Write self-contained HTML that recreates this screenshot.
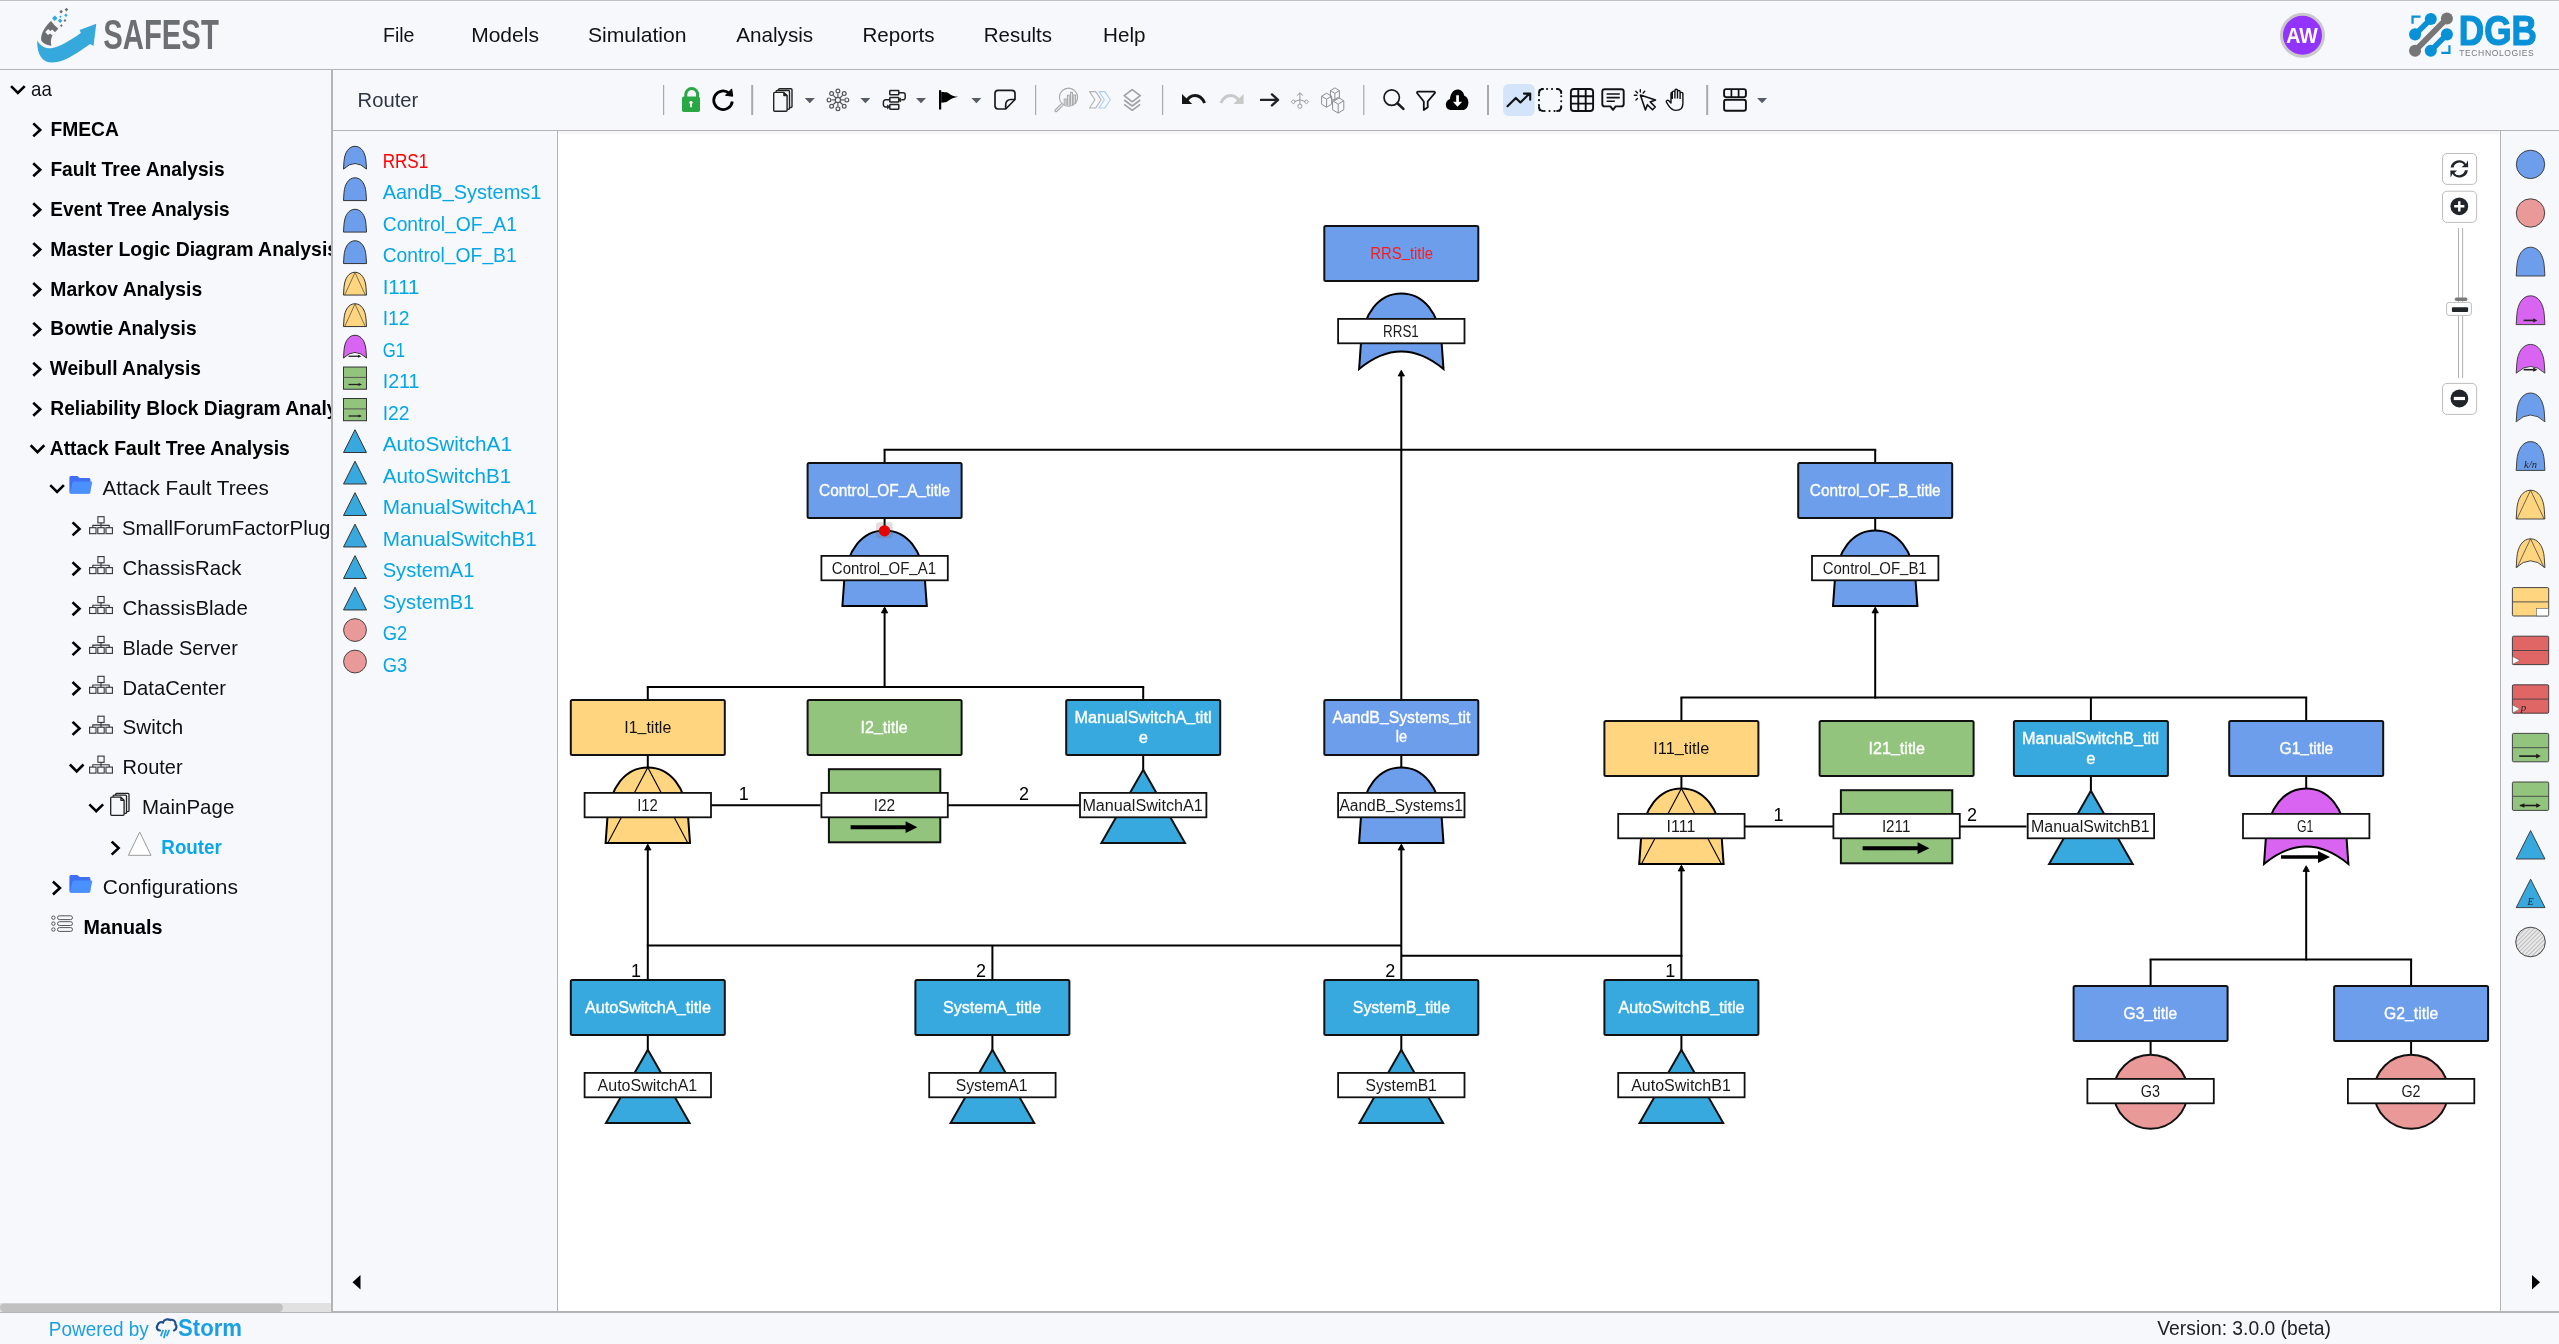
<!DOCTYPE html>
<html><head><meta charset="utf-8"><title>SAFEST</title>
<style>
html,body{margin:0;padding:0;background:#f7f8fc;}
body{width:2559px;height:1344px;overflow:hidden;position:relative;font-family:'Liberation Sans', sans-serif;}
svg{position:absolute;left:0;top:0;display:block;will-change:transform;}
text{font-family:'Liberation Sans', sans-serif;}
</style></head><body>
<svg width="2559" height="1344" viewBox="0 0 2559 1344">
<rect x="0" y="0" width="2559" height="1344" fill="#f7f8fc" stroke="none" stroke-width="0" rx="0"/>
<rect x="558" y="131" width="1942" height="1180" fill="#ffffff" stroke="none" stroke-width="0" rx="0"/>
<linearGradient id="shd" x1="0" y1="0" x2="0" y2="1"><stop offset="0" stop-color="#f3f3f3"/><stop offset="1" stop-color="#ffffff"/></linearGradient>
<rect x="558" y="131" width="1942" height="5" fill="url(#shd)" stroke="none" stroke-width="0" rx="0"/>
<rect x="0" y="0" width="2559" height="1" fill="#c0c1c3" stroke="none" stroke-width="0" rx="0"/>
<rect x="0" y="69" width="2559" height="1" fill="#b4b4b4" stroke="none" stroke-width="0" rx="0"/>
<rect x="333" y="130" width="2226" height="1" fill="#b4b4b4" stroke="none" stroke-width="0" rx="0"/>
<rect x="331" y="70" width="2" height="1242" fill="#b4b4b4" stroke="none" stroke-width="0" rx="0"/>
<rect x="557" y="131" width="1" height="1180" fill="#b4b4b4" stroke="none" stroke-width="0" rx="0"/>
<rect x="2500" y="131" width="1" height="1180" fill="#b4b4b4" stroke="none" stroke-width="0" rx="0"/>
<rect x="0" y="1311" width="2559" height="2" fill="#b4b4b4" stroke="none" stroke-width="0" rx="0"/>
<g transform="translate(30,0) scale(0.0506)"><path d="M140,800 C140,1100 250,1240 450,1235 C650,1230 850,1110 1190,870 L1255,910 L1310,470 L980,595 L1005,650 C800,790 600,920 420,955 C280,965 190,880 140,800 Z" fill="#35a8dc"/><path d="M415,415 C320,500 210,650 220,780 C230,850 330,890 425,905 C400,820 420,720 470,660 L560,570 L480,495 Z" fill="#6b6e73"/><path d="M300,630 L360,575 L400,615 L440,585 L500,640 L440,700 L400,660 L355,690 Z" fill="#f6f7fb"/><path d="M720,155 L755,190 L720,225 L685,190 Z M615,195 L650,230 L615,265 L580,230 Z M690,377 L718,405 L690,433 L662,405 Z M620,477 L648,505 L620,533 L592,505 Z" fill="#6b6e73"/><path d="M710,265 L745,300 L710,335 L675,300 Z M600,305 L625,330 L600,355 L575,330 Z M490,305 L545,360 L490,415 L435,360 Z M595,365 L640,410 L595,455 L550,410 Z" fill="#35a8dc"/></g>
<text x="103.2" y="48.6" font-size="42.5" fill="#6b6e73" font-weight="bold" text-anchor="start" textLength="115.6" lengthAdjust="spacingAndGlyphs">SAFEST</text>
<text x="383.0" y="42.2" font-size="21" fill="#111" font-weight="normal" text-anchor="start" textLength="31.5" lengthAdjust="spacingAndGlyphs">File</text>
<text x="471.2" y="42.2" font-size="21" fill="#111" font-weight="normal" text-anchor="start" textLength="67.7" lengthAdjust="spacingAndGlyphs">Models</text>
<text x="587.9" y="42.2" font-size="21" fill="#111" font-weight="normal" text-anchor="start" textLength="98.7" lengthAdjust="spacingAndGlyphs">Simulation</text>
<text x="736.2" y="42.2" font-size="21" fill="#111" font-weight="normal" text-anchor="start" textLength="77.0" lengthAdjust="spacingAndGlyphs">Analysis</text>
<text x="862.5" y="42.2" font-size="21" fill="#111" font-weight="normal" text-anchor="start" textLength="72.0" lengthAdjust="spacingAndGlyphs">Reports</text>
<text x="983.8" y="42.2" font-size="21" fill="#111" font-weight="normal" text-anchor="start" textLength="68.2" lengthAdjust="spacingAndGlyphs">Results</text>
<text x="1103.0" y="42.2" font-size="21" fill="#111" font-weight="normal" text-anchor="start" textLength="42.5" lengthAdjust="spacingAndGlyphs">Help</text>
<circle cx="2302.5" cy="35.3" r="21" fill="#9333fe" stroke="#c9c9c9" stroke-width="3"/>
<text x="2286.2" y="42.8" font-size="22.5" fill="#ffffff" font-weight="bold" text-anchor="start" textLength="31.6" lengthAdjust="spacingAndGlyphs">AW</text>
<g transform="translate(2200,0) scale(0.14029)"><path d="M1515,170 L1515,118 L1572,118" fill="none" stroke="#0891d6" stroke-width="16"/><path d="M1778,322 L1778,377 L1720,377" fill="none" stroke="#0891d6" stroke-width="16"/><line x1="1645" y1="135" x2="1535" y2="245" stroke="#0891d6" stroke-width="40"/><circle cx="1645" cy="135" r="43" fill="#0891d6"/><circle cx="1533" cy="245" r="43" fill="#0891d6"/><line x1="1760" y1="245" x2="1645" y2="362" stroke="#0891d6" stroke-width="40"/><circle cx="1760" cy="245" r="43" fill="#0891d6"/><circle cx="1645" cy="362" r="43" fill="#0891d6"/><line x1="1760" y1="132" x2="1533" y2="362" stroke="#767676" stroke-width="42"/><circle cx="1760" cy="132" r="43" fill="#767676"/><circle cx="1533" cy="362" r="43" fill="#767676"/></g>
<text x="2458.8" y="45.2" font-size="43" fill="#0891d6" font-weight="bold" text-anchor="start" textLength="78.0" lengthAdjust="spacingAndGlyphs" stroke="#0891d6" stroke-width="1.2">DGB</text>
<text x="2459.2" y="56.1" font-size="8.6" fill="#7a7a7a" textLength="74.6" lengthAdjust="spacing">TECHNOLOGIES</text>
<clipPath id="sbclip"><rect x="0" y="70" width="331" height="1240"/></clipPath>
<g clip-path="url(#sbclip)">
<path d="M12.0,87.1 L17.9,93.0 L23.8,87.1" fill="none" stroke="#000" stroke-width="2.6" stroke-linecap="square"/>
<text x="31.0" y="96.0" font-size="21" fill="#111" font-weight="normal" text-anchor="start" textLength="20.8" lengthAdjust="spacingAndGlyphs">aa</text>
<path d="M34.2,124.3 L40.2,129.9 L34.2,135.5" fill="none" stroke="#000" stroke-width="2.6" stroke-linecap="square"/>
<text x="50.4" y="135.9" font-size="21" fill="#000" font-weight="bold" text-anchor="start" textLength="68.4" lengthAdjust="spacingAndGlyphs">FMECA</text>
<path d="M34.2,164.2 L40.2,169.8 L34.2,175.4" fill="none" stroke="#000" stroke-width="2.6" stroke-linecap="square"/>
<text x="50.4" y="175.8" font-size="21" fill="#000" font-weight="bold" text-anchor="start" textLength="174.2" lengthAdjust="spacingAndGlyphs">Fault Tree Analysis</text>
<path d="M34.2,204.1 L40.2,209.7 L34.2,215.3" fill="none" stroke="#000" stroke-width="2.6" stroke-linecap="square"/>
<text x="50.3" y="215.7" font-size="21" fill="#000" font-weight="bold" text-anchor="start" textLength="179.3" lengthAdjust="spacingAndGlyphs">Event Tree Analysis</text>
<path d="M34.2,244.0 L40.2,249.6 L34.2,255.2" fill="none" stroke="#000" stroke-width="2.6" stroke-linecap="square"/>
<text x="50.3" y="255.6" font-size="21" fill="#000" font-weight="bold" text-anchor="start" textLength="287.8" lengthAdjust="spacingAndGlyphs">Master Logic Diagram Analysis</text>
<path d="M34.2,283.9 L40.2,289.5 L34.2,295.1" fill="none" stroke="#000" stroke-width="2.6" stroke-linecap="square"/>
<text x="50.3" y="295.5" font-size="21" fill="#000" font-weight="bold" text-anchor="start" textLength="151.9" lengthAdjust="spacingAndGlyphs">Markov Analysis</text>
<path d="M34.2,323.8 L40.2,329.4 L34.2,335.0" fill="none" stroke="#000" stroke-width="2.6" stroke-linecap="square"/>
<text x="50.3" y="335.4" font-size="21" fill="#000" font-weight="bold" text-anchor="start" textLength="146.3" lengthAdjust="spacingAndGlyphs">Bowtie Analysis</text>
<path d="M34.2,363.7 L40.2,369.3 L34.2,374.9" fill="none" stroke="#000" stroke-width="2.6" stroke-linecap="square"/>
<text x="49.7" y="375.3" font-size="21" fill="#000" font-weight="bold" text-anchor="start" textLength="151.3" lengthAdjust="spacingAndGlyphs">Weibull Analysis</text>
<path d="M34.2,403.6 L40.2,409.2 L34.2,414.8" fill="none" stroke="#000" stroke-width="2.6" stroke-linecap="square"/>
<text x="50.3" y="415.2" font-size="21" fill="#000" font-weight="bold" text-anchor="start" textLength="313.9" lengthAdjust="spacingAndGlyphs">Reliability Block Diagram Analysis</text>
<path d="M31.6,446.2 L37.5,452.1 L43.4,446.2" fill="none" stroke="#000" stroke-width="2.6" stroke-linecap="square"/>
<text x="49.7" y="455.1" font-size="21" fill="#000" font-weight="bold" text-anchor="start" textLength="240.1" lengthAdjust="spacingAndGlyphs">Attack Fault Tree Analysis</text>
<path d="M51.2,486.1 L57.1,492.0 L63.0,486.1" fill="none" stroke="#000" stroke-width="2.6" stroke-linecap="square"/>
<text x="102.5" y="495.0" font-size="21" fill="#111" font-weight="normal" text-anchor="start" textLength="166.3" lengthAdjust="spacingAndGlyphs">Attack Fault Trees</text>
<path d="M70.9,475.9 h6.5 l2.2,2.2 h9.3 a1.5,1.5 0 0 1 1.5,1.5 v12.5 a1.5,1.5 0 0 1 -1.5,1.5 h-18 a1.5,1.5 0 0 1 -1.5,-1.5 v-14.7 a1.5,1.5 0 0 1 1.5,-1.5 z" fill="#3f6ff5"/>
<path d="M73.60000000000001,481.5 h17.6 a1,1 0 0 1 1,1.2 l-2.4,10 a1.5,1.5 0 0 1 -1.5,1.1 h-17.2 a1,1 0 0 1 -1,-1.2 l2.3,-9.9 a1.5,1.5 0 0 1 1.2,-1.2 z" fill="#4a90fe"/>
<path d="M73.5,523.3 L79.5,528.9 L73.5,534.5" fill="none" stroke="#000" stroke-width="2.6" stroke-linecap="square"/>
<text x="122.0" y="534.9" font-size="21" fill="#111" font-weight="normal" text-anchor="start" textLength="258.2" lengthAdjust="spacingAndGlyphs">SmallForumFactorPluggable</text>
<g fill="none" stroke="#333" stroke-width="1.1"><rect x="97.9" y="516.7" width="6.2" height="6.2"/><path d="M101,522.9 v2.6 M92.8,527.7 v-2.3 h16.4 v2.3 M101,525.5 v2.2"/><rect x="89.6" y="527.7" width="6.4" height="6"/><rect x="97.8" y="527.7" width="6.4" height="6"/><rect x="106" y="527.7" width="6.4" height="6"/></g>
<path d="M73.5,563.2 L79.5,568.8 L73.5,574.4" fill="none" stroke="#000" stroke-width="2.6" stroke-linecap="square"/>
<text x="122.5" y="574.8" font-size="21" fill="#111" font-weight="normal" text-anchor="start" textLength="118.9" lengthAdjust="spacingAndGlyphs">ChassisRack</text>
<g fill="none" stroke="#333" stroke-width="1.1"><rect x="97.9" y="556.6" width="6.2" height="6.2"/><path d="M101,562.8 v2.6 M92.8,567.6 v-2.3 h16.4 v2.3 M101,565.4 v2.2"/><rect x="89.6" y="567.6" width="6.4" height="6"/><rect x="97.8" y="567.6" width="6.4" height="6"/><rect x="106" y="567.6" width="6.4" height="6"/></g>
<path d="M73.5,603.1 L79.5,608.7 L73.5,614.3" fill="none" stroke="#000" stroke-width="2.6" stroke-linecap="square"/>
<text x="122.5" y="614.7" font-size="21" fill="#111" font-weight="normal" text-anchor="start" textLength="125.3" lengthAdjust="spacingAndGlyphs">ChassisBlade</text>
<g fill="none" stroke="#333" stroke-width="1.1"><rect x="97.9" y="596.5" width="6.2" height="6.2"/><path d="M101,602.6999999999999 v2.6 M92.8,607.5 v-2.3 h16.4 v2.3 M101,605.3 v2.2"/><rect x="89.6" y="607.5" width="6.4" height="6"/><rect x="97.8" y="607.5" width="6.4" height="6"/><rect x="106" y="607.5" width="6.4" height="6"/></g>
<path d="M73.5,643.0 L79.5,648.6 L73.5,654.2" fill="none" stroke="#000" stroke-width="2.6" stroke-linecap="square"/>
<text x="122.5" y="654.6" font-size="21" fill="#111" font-weight="normal" text-anchor="start" textLength="115.3" lengthAdjust="spacingAndGlyphs">Blade Server</text>
<g fill="none" stroke="#333" stroke-width="1.1"><rect x="97.9" y="636.4000000000001" width="6.2" height="6.2"/><path d="M101,642.6 v2.6 M92.8,647.4000000000001 v-2.3 h16.4 v2.3 M101,645.2 v2.2"/><rect x="89.6" y="647.4000000000001" width="6.4" height="6"/><rect x="97.8" y="647.4000000000001" width="6.4" height="6"/><rect x="106" y="647.4000000000001" width="6.4" height="6"/></g>
<path d="M73.5,682.9 L79.5,688.5 L73.5,694.1" fill="none" stroke="#000" stroke-width="2.6" stroke-linecap="square"/>
<text x="122.5" y="694.5" font-size="21" fill="#111" font-weight="normal" text-anchor="start" textLength="103.4" lengthAdjust="spacingAndGlyphs">DataCenter</text>
<g fill="none" stroke="#333" stroke-width="1.1"><rect x="97.9" y="676.3000000000001" width="6.2" height="6.2"/><path d="M101,682.5 v2.6 M92.8,687.3000000000001 v-2.3 h16.4 v2.3 M101,685.1 v2.2"/><rect x="89.6" y="687.3000000000001" width="6.4" height="6"/><rect x="97.8" y="687.3000000000001" width="6.4" height="6"/><rect x="106" y="687.3000000000001" width="6.4" height="6"/></g>
<path d="M73.5,722.8 L79.5,728.4 L73.5,734.0" fill="none" stroke="#000" stroke-width="2.6" stroke-linecap="square"/>
<text x="122.5" y="734.4" font-size="21" fill="#111" font-weight="normal" text-anchor="start" textLength="60.7" lengthAdjust="spacingAndGlyphs">Switch</text>
<g fill="none" stroke="#333" stroke-width="1.1"><rect x="97.9" y="716.2" width="6.2" height="6.2"/><path d="M101,722.4 v2.6 M92.8,727.2 v-2.3 h16.4 v2.3 M101,725.0 v2.2"/><rect x="89.6" y="727.2" width="6.4" height="6"/><rect x="97.8" y="727.2" width="6.4" height="6"/><rect x="106" y="727.2" width="6.4" height="6"/></g>
<path d="M70.8,765.4 L76.7,771.3 L82.6,765.4" fill="none" stroke="#000" stroke-width="2.6" stroke-linecap="square"/>
<text x="122.6" y="774.3" font-size="21" fill="#111" font-weight="normal" text-anchor="start" textLength="60.0" lengthAdjust="spacingAndGlyphs">Router</text>
<g fill="none" stroke="#333" stroke-width="1.1"><rect x="97.9" y="756.1" width="6.2" height="6.2"/><path d="M101,762.3 v2.6 M92.8,767.1 v-2.3 h16.4 v2.3 M101,764.9 v2.2"/><rect x="89.6" y="767.1" width="6.4" height="6"/><rect x="97.8" y="767.1" width="6.4" height="6"/><rect x="106" y="767.1" width="6.4" height="6"/></g>
<path d="M90.3,805.3 L96.2,811.2 L102.2,805.3" fill="none" stroke="#000" stroke-width="2.6" stroke-linecap="square"/>
<text x="142.0" y="814.2" font-size="21" fill="#111" font-weight="normal" text-anchor="start" textLength="92.3" lengthAdjust="spacingAndGlyphs">MainPage</text>
<g fill="#f6f7fb" stroke="#222" stroke-width="1.3" stroke-linejoin="round"><rect x="115.6" y="793.4" width="13.4" height="18.2" rx="1"/><rect x="113.1" y="795.2" width="13.4" height="18.2" rx="1"/><path d="M111.7,797.1 H120.9 L124.1,800.3 V814.3 a1,1 0 0 1 -1,1 H111.7 a1,1 0 0 1 -1,-1 V798.1 a1,1 0 0 1 1,-1 Z M120.9,797.1 V800.3 H124.1"/></g>
<path d="M112.6,842.5 L118.6,848.1 L112.6,853.7" fill="none" stroke="#000" stroke-width="2.6" stroke-linecap="square"/>
<text x="161.3" y="854.1" font-size="21" fill="#0aa6e8" font-weight="bold" text-anchor="start" textLength="60.6" lengthAdjust="spacingAndGlyphs">Router</text>
<path d="M139.7,832.1 L151,855.3000000000001 L128.4,855.3000000000001 Z" fill="#fff" stroke="#9a9a9a" stroke-width="1"/>
<path d="M53.9,882.4 L59.9,888.0 L53.9,893.6" fill="none" stroke="#000" stroke-width="2.6" stroke-linecap="square"/>
<text x="102.8" y="894.0" font-size="21" fill="#111" font-weight="normal" text-anchor="start" textLength="135.2" lengthAdjust="spacingAndGlyphs">Configurations</text>
<path d="M70.9,874.9 h6.5 l2.2,2.2 h9.3 a1.5,1.5 0 0 1 1.5,1.5 v12.5 a1.5,1.5 0 0 1 -1.5,1.5 h-18 a1.5,1.5 0 0 1 -1.5,-1.5 v-14.7 a1.5,1.5 0 0 1 1.5,-1.5 z" fill="#3f6ff5"/>
<path d="M73.60000000000001,880.5 h17.6 a1,1 0 0 1 1,1.2 l-2.4,10 a1.5,1.5 0 0 1 -1.5,1.1 h-17.2 a1,1 0 0 1 -1,-1.2 l2.3,-9.9 a1.5,1.5 0 0 1 1.2,-1.2 z" fill="#4a90fe"/>
<text x="83.5" y="933.9" font-size="21" fill="#000" font-weight="bold" text-anchor="start" textLength="78.9" lengthAdjust="spacingAndGlyphs">Manuals</text>
<circle cx="53.4" cy="917.7" r="1.7" fill="none" stroke="#555" stroke-width="1"/>
<rect x="57.5" y="915.8" width="15" height="3.8" rx="1.9" fill="none" stroke="#555" stroke-width="1"/>
<circle cx="53.4" cy="923.6" r="1.7" fill="none" stroke="#555" stroke-width="1"/>
<rect x="57.5" y="921.7" width="15" height="3.8" rx="1.9" fill="none" stroke="#555" stroke-width="1"/>
<circle cx="53.4" cy="929.5" r="1.7" fill="none" stroke="#555" stroke-width="1"/>
<rect x="57.5" y="927.6" width="15" height="3.8" rx="1.9" fill="none" stroke="#555" stroke-width="1"/>
</g>
<text x="357.6" y="106.8" font-size="21" fill="#2d3642" font-weight="normal" text-anchor="start" textLength="60.6" lengthAdjust="spacingAndGlyphs">Router</text>
<rect x="663" y="85" width="1.2" height="30" fill="#a9a9a9" stroke="none" stroke-width="0" rx="0"/>
<rect x="751.2" y="85" width="2" height="30" fill="#a9a9a9" stroke="none" stroke-width="0" rx="0"/>
<rect x="1035" y="85" width="1.2" height="30" fill="#a9a9a9" stroke="none" stroke-width="0" rx="0"/>
<rect x="1162" y="85" width="1.2" height="30" fill="#a9a9a9" stroke="none" stroke-width="0" rx="0"/>
<rect x="1363.2" y="85" width="1.2" height="30" fill="#a9a9a9" stroke="none" stroke-width="0" rx="0"/>
<rect x="1487" y="85" width="2" height="30" fill="#a9a9a9" stroke="none" stroke-width="0" rx="0"/>
<rect x="1706.2" y="85" width="2" height="30" fill="#a9a9a9" stroke="none" stroke-width="0" rx="0"/>
<path d="M804.8,98 L814.8,98 L809.8,103.3 Z" fill="#565d66"/>
<path d="M860.4,98 L870.4,98 L865.4,103.3 Z" fill="#565d66"/>
<path d="M916,98 L926,98 L921,103.3 Z" fill="#565d66"/>
<path d="M971.4,98 L981.4,98 L976.4,103.3 Z" fill="#565d66"/>
<path d="M1757.1,98 L1767.1,98 L1762.1,103.3 Z" fill="#565d66"/>
<path d="M685.8,97 v-2.6 a5.9,5.9 0 0 1 11.8,0 v2.6" fill="none" stroke="#28a745" stroke-width="3"/>
<rect x="682" y="96.6" width="18" height="15.4" rx="1.8" fill="#28a745"/>
<circle cx="691" cy="102.6" r="1.7" fill="#fff"/><rect x="690.1" y="102.6" width="1.8" height="4.6" fill="#fff"/>
<path d="M732.3,101.5 A9.3,9.3 0 1 1 729.2,93.2" fill="none" stroke="#000" stroke-width="2.8"/>
<path d="M731.7,88.9 L732.7,96.2 L725.5,95.3 Z" fill="#000" stroke="#000" stroke-width="1"/>
<g fill="#f6f7fb" stroke="#222" stroke-width="1.4" stroke-linejoin="round"><rect x="778.6" y="88.7" width="13.4" height="18.8" rx="1"/><rect x="776.1" y="90.5" width="13.4" height="18.8" rx="1"/><path d="M774.7,92.4 H783.9 L787.1,95.6 V110.2 a1,1 0 0 1 -1,1 H774.7 a1,1 0 0 1 -1,-1 V93.4 a1,1 0 0 1 1,-1 Z M783.9,92.4 V95.6 H787.1"/></g>
<g fill="none" stroke="#555" stroke-width="1.2"><circle cx="837.9" cy="99.9" r="2.6"/><line x1="837.90" y1="97.30" x2="837.90" y2="93.40"/><circle cx="837.90" cy="91.00" r="1.9"/><line x1="836.06" y1="98.06" x2="833.30" y2="95.30"/><circle cx="831.61" cy="93.61" r="1.9"/><line x1="835.30" y1="99.90" x2="831.40" y2="99.90"/><circle cx="829.00" cy="99.90" r="1.9"/><line x1="836.06" y1="101.74" x2="833.30" y2="104.50"/><circle cx="831.61" cy="106.19" r="1.9"/><line x1="837.90" y1="102.50" x2="837.90" y2="106.40"/><circle cx="837.90" cy="108.80" r="1.9"/><line x1="839.74" y1="101.74" x2="842.50" y2="104.50"/><circle cx="844.19" cy="106.19" r="1.9"/><line x1="840.50" y1="99.90" x2="844.40" y2="99.90"/><circle cx="846.80" cy="99.90" r="1.9"/><line x1="839.74" y1="98.06" x2="842.50" y2="95.30"/><circle cx="844.19" cy="93.61" r="1.9"/></g>
<g fill="none" stroke="#222" stroke-width="1.5"><rect x="889.8" y="90.6" width="9" height="4.2" rx="0.6"/><rect x="889.8" y="97.6" width="9" height="4.4" rx="0.6"/><rect x="889.8" y="104.6" width="9" height="4.6" rx="0.6"/><path d="M898.8,92.7 h4.2 a2.2,2.2 0 0 1 2.2,2.2 v2.7 a2.2,2.2 0 0 1 -2.2,2.2 h-1.8"/><path d="M889.8,99.8 h-4.2 a2.2,2.2 0 0 0 -2.2,2.2 v2.7 a2.2,2.2 0 0 0 2.2,2.2 h1.8"/></g><path d="M900.6,98 L900.6,101.8 L898.5,99.9 Z M887.5,105 L887.5,108.8 L889.6,106.9 Z" fill="#222" stroke="#222" stroke-width="0.8"/>
<rect x="939" y="90.2" width="2.2" height="19.3" fill="#000"/>
<path d="M941.2,91.7 C945,92.5 947,91.5 949,93.5 C951,95.5 954,96.5 958.2,96.8 C954,97.5 951,99 948,101 C946,102.5 944,102.6 941.2,102.7 Z" fill="#000"/>
<path d="M1005.7,109 h-7.5 a3.2,3.2 0 0 1 -3.2,-3.2 v-12.3 a3.2,3.2 0 0 1 3.2,-3.2 h13.6 a3.2,3.2 0 0 1 3.2,3.2 v6 Z" fill="none" stroke="#1a1a1a" stroke-width="1.7" stroke-linejoin="round"/>
<path d="M1005.7,109 v-4.5 a5,5 0 0 1 5,-5 h4.3" fill="none" stroke="#1a1a1a" stroke-width="1.7"/>
<g fill="none" stroke="#a8a8a8" stroke-width="1.1"><circle cx="1068.5" cy="97.2" r="9.1"/><path d="M1061.6,103.6 L1055.2,110 a1,1 0 0 0 1.5,1.5 L1063.1,105.1"/><path d="M1064.2,105 v-6 h1.8 v6 M1067.4,105.8 v-10.6 h1.8 v10.6 M1070.6,105.4 v-13 h1.8 v13 M1073.8,104 v-9 h1.8 v9"/></g>
<path d="M1089.5,91.6 L1095.7,91.6 L1101.1,99.8 L1095.7,108 L1089.5,108 L1094.9,99.8 Z" fill="none" stroke="#b0b0b0" stroke-width="1.1" stroke-linejoin="round"/>
<path d="M1099,91.6 L1104.9,91.6 L1110.3,99.8 L1104.9,108 L1099,108 L1104.4,99.8 Z" fill="none" stroke="#aacdf2" stroke-width="1.1" stroke-linejoin="round"/>
<g fill="none" stroke="#a0a0a0" stroke-width="1.6" stroke-linejoin="round"><path d="M1132.2,89.6 L1140.2,95.7 L1132.2,101.8 L1124.2,95.7 Z"/><path d="M1124.2,100 L1132.2,106 L1140.2,100"/><path d="M1124.2,104.3 L1132.2,110.3 L1140.2,104.3"/></g>
<g><path d="M1186.3,101.5 C1190,94 1200,92.5 1204.6,103" fill="none" stroke="#161616" stroke-width="3"/><path d="M1182,94 L1182,104 L1192.2,104 Z" fill="#161616"/></g>
<g transform="translate(2464.2,0) scale(-1,1)"><path d="M1224.8999999999999,101.5 C1228.6,94 1238.6,92.5 1243.1999999999998,103" fill="none" stroke="#c9c9c9" stroke-width="3"/><path d="M1220.6,94 L1220.6,104 L1230.8,104 Z" fill="#c9c9c9"/></g>
<path d="M1261,99.9 H1277.5 M1272,94.4 L1278,99.9 L1272,105.4" fill="none" stroke="#222" stroke-width="2.4" stroke-linecap="round" stroke-linejoin="round"/>
<g fill="none" stroke="#9a9a9a" stroke-width="1"><path d="M1299.9,92.8 V104 M1296.9,95.6 L1299.9,92.8 L1302.9,95.6 M1299.9,99.8 L1294.5,101.5 M1299.9,99.8 L1305.3,101.5"/><path d="M1291.3,101.8 L1293.4,99.7 L1295.5,101.8 L1293.4,103.9 Z M1304.3,101.8 L1306.4,99.7 L1308.5,101.8 L1306.4,103.9 Z"/><path d="M1297.8,106.2 a2.1,2.1 0 1 0 4.2,0 a2.1,2.1 0 1 0 -4.2,0"/></g>
<g fill="none" stroke="#8f8f8f" stroke-width="1" stroke-linejoin="round"><path d="M1321.6,96.2 L1326.6,93.2 L1331.6,96.2 L1331.6,104.2 L1326.6,107.2 L1321.6,104.2 Z M1321.6,96.2 L1326.6,99.2 L1331.6,96.2 M1326.6,99.2 V107.2"/><path d="M1330.4,90.60000000000001 L1334.9,87.9 L1339.4,90.60000000000001 L1339.4,97.80000000000001 L1334.9,100.50000000000001 L1330.4,97.80000000000001 Z M1330.4,90.60000000000001 L1334.9,93.30000000000001 L1339.4,90.60000000000001 M1334.9,93.30000000000001 V100.50000000000001"/><path d="M1332.6,100.76 L1338.1999999999998,97.4 L1343.8,100.76 L1343.8,109.72 L1338.1999999999998,113.08 L1332.6,109.72 Z M1332.6,100.76 L1338.1999999999998,104.12 L1343.8,100.76 M1338.1999999999998,104.12 V113.08"/></g>
<circle cx="1391.7" cy="97.6" r="7.7" fill="none" stroke="#1a1a1a" stroke-width="1.7"/>
<path d="M1397.4,103.3 L1403.4,108.9" stroke="#1a1a1a" stroke-width="2.6" stroke-linecap="round"/>
<path d="M1418,91.6 H1434 a1,1 0 0 1 0.8,1.6 L1427.7,101.5 V107.2 L1423.8,110 V101.5 L1417.2,93.2 a1,1 0 0 1 0.8,-1.6 Z" fill="none" stroke="#111" stroke-width="1.8" stroke-linejoin="round"/>
<path d="M1451,110 C1447.5,110 1445.8,107.5 1445.8,104.6 C1445.8,101.6 1447.8,99.6 1450,99 C1450.3,93.5 1453.5,89.4 1457.5,89.4 C1461,89.4 1463.8,92 1464.3,95.7 C1467,96.6 1468.4,99.5 1468.4,102.4 C1468.4,106.6 1466,110 1462.6,110 Z" fill="#000"/>
<path d="M1456.2,95.3 h2.7 v6.5 h3.3 l-4.65,5 l-4.65,-5 h3.3 Z" fill="#fff"/>
<rect x="1503.1" y="83.9" width="31.6" height="32.1" fill="#d4e4fb" stroke="none" stroke-width="0" rx="5.5"/>
<path d="M1507.5,106.2 L1515.8,97.9 L1520.4,102.5 L1529.5,93.6 M1523.9,93.6 H1530.2 V99.8" fill="none" stroke="#111" stroke-width="2.1" stroke-linecap="round" stroke-linejoin="round"/>
<rect x="1539" y="89" width="22.2" height="22" rx="3" fill="none" stroke="#111" stroke-width="2.1" stroke-dasharray="0.1 4.9" stroke-linecap="round"/>
<path d="M1539,93 a4,4 0 0 1 4,-4 M1557.2,89 a4,4 0 0 1 4,4 M1561.2,107 a4,4 0 0 1 -4,4 M1543,111 a4,4 0 0 1 -4,-4" fill="none" stroke="#111" stroke-width="2.1" stroke-linecap="round"/>
<rect x="1570.9" y="89" width="22.2" height="22" rx="3" fill="none" stroke="#111" stroke-width="1.9"/>
<path d="M1578.3,89 V111 M1585.7,89 V111 M1570.9,96.3 H1593.1 M1570.9,103.6 H1593.1" stroke="#111" stroke-width="1.9"/>
<path d="M1604.7,89.2 H1621.3 a2.4,2.4 0 0 1 2.4,2.4 V104 a2.4,2.4 0 0 1 -2.4,2.4 H1615.6 L1613,109.8 L1610.4,106.4 H1604.7 a2.4,2.4 0 0 1 -2.4,-2.4 V91.6 a2.4,2.4 0 0 1 2.4,-2.4 Z" fill="none" stroke="#111" stroke-width="1.9" stroke-linejoin="round"/>
<path d="M1606.6,94 H1619.8 M1606.6,97.6 H1619.8 M1606.6,101.3 H1614.8" stroke="#111" stroke-width="1.6"/>
<path d="M1640.4,95 L1645.4,110 L1647.4,104.7 L1652.5,109.8 L1655.3,107 L1650.2,101.9 L1655.5,99.9 Z" fill="none" stroke="#111" stroke-width="1.6" stroke-linejoin="round"/>
<path d="M1640.3,89.6 V92 M1635.8,91.2 L1637.5,92.9 M1644.8,91.2 L1643.1,92.9 M1634.3,95.3 H1636.8 M1635.9,100 L1637.5,98.4" stroke="#111" stroke-width="1.4" stroke-linecap="round"/>
<path d="M1672.3,99 V92.4 a1.3,1.3 0 0 1 2.6,0 V98.6 M1674.9,98.6 V90.6 a1.3,1.3 0 0 1 2.6,0 V98.6 M1677.5,98.6 V91.8 a1.3,1.3 0 0 1 2.6,0 V99 M1680.1,99 V93.8 a1.4,1.4 0 0 1 2.8,0 V103.5 C1682.9,108 1680,110.4 1676,110.4 C1672.5,110.4 1670.5,108.5 1668.6,105.6 L1666.4,102.2 a1.4,1.4 0 0 1 2.2,-1.6 L1671,103 V93.5 a1.3,1.3 0 0 1 1.3,-1.3" fill="none" stroke="#111" stroke-width="1.4" stroke-linejoin="round"/>
<rect x="1724.1" y="89.1" width="21.8" height="8" rx="2" fill="none" stroke="#111" stroke-width="1.9"/>
<path d="M1731.4,89.1 V97.1 M1738.6,89.1 V97.1" stroke="#111" stroke-width="1.7"/>
<rect x="1724.1" y="99.8" width="21.8" height="11" rx="2" fill="none" stroke="#111" stroke-width="1.9"/>
<text x="382.7" y="167.9" font-size="21" fill="#ff0000" font-weight="normal" text-anchor="start" textLength="45.6" lengthAdjust="spacingAndGlyphs">RRS1</text>
<path d="M343.50,169.10 L344.01,161.30 C344.70,152.30 348.85,146.30 355.00,146.30 C361.15,146.30 365.30,152.30 365.99,161.30 L366.50,169.10 Q355.00,157.90 343.50,169.10 Z" fill="#6d9eeb" stroke="#333" stroke-width="1" stroke-linejoin="miter"/>
<text x="382.7" y="199.4" font-size="21" fill="#05a6e6" font-weight="normal" text-anchor="start" textLength="158.7" lengthAdjust="spacingAndGlyphs">AandB<tspan dy="-2.0">_</tspan><tspan dy="2.0">Systems1</tspan></text>
<path d="M343.50,200.59 L344.01,192.79 C344.70,183.79 348.85,177.79 355.00,177.79 C361.15,177.79 365.30,183.79 365.99,192.79 L366.50,200.59 Z" fill="#6d9eeb" stroke="#333" stroke-width="1" stroke-linejoin="miter"/>
<text x="382.7" y="230.9" font-size="21" fill="#05a6e6" font-weight="normal" text-anchor="start" textLength="134.2" lengthAdjust="spacingAndGlyphs">Control<tspan dy="-2.0">_</tspan><tspan dy="2.0">OF</tspan><tspan dy="-2.0">_</tspan><tspan dy="2.0">A1</tspan></text>
<path d="M343.50,232.08 L344.01,224.28 C344.70,215.28 348.85,209.28 355.00,209.28 C361.15,209.28 365.30,215.28 365.99,224.28 L366.50,232.08 Z" fill="#6d9eeb" stroke="#333" stroke-width="1" stroke-linejoin="miter"/>
<text x="382.7" y="262.4" font-size="21" fill="#05a6e6" font-weight="normal" text-anchor="start" textLength="134.0" lengthAdjust="spacingAndGlyphs">Control<tspan dy="-2.0">_</tspan><tspan dy="2.0">OF</tspan><tspan dy="-2.0">_</tspan><tspan dy="2.0">B1</tspan></text>
<path d="M343.50,263.57 L344.01,255.77 C344.70,246.77 348.85,240.77 355.00,240.77 C361.15,240.77 365.30,246.77 365.99,255.77 L366.50,263.57 Z" fill="#6d9eeb" stroke="#333" stroke-width="1" stroke-linejoin="miter"/>
<text x="382.7" y="293.9" font-size="21" fill="#05a6e6" font-weight="normal" text-anchor="start" textLength="36.8" lengthAdjust="spacingAndGlyphs">I111</text>
<path d="M343.50,295.06 L344.01,287.26 C344.70,278.26 348.85,272.26 355.00,272.26 C361.15,272.26 365.30,278.26 365.99,287.26 L366.50,295.06 Z" fill="#ffd580" stroke="#333" stroke-width="1" stroke-linejoin="miter"/>
<path d="M344.70,295.06 L355.00,272.56 L365.30,295.06" fill="none" stroke="#444" stroke-width="0.7"/>
<text x="382.7" y="325.4" font-size="21" fill="#05a6e6" font-weight="normal" text-anchor="start" textLength="26.9" lengthAdjust="spacingAndGlyphs">I12</text>
<path d="M343.50,326.55 L344.01,318.75 C344.70,309.75 348.85,303.75 355.00,303.75 C361.15,303.75 365.30,309.75 365.99,318.75 L366.50,326.55 Z" fill="#ffd580" stroke="#333" stroke-width="1" stroke-linejoin="miter"/>
<path d="M344.70,326.55 L355.00,304.05 L365.30,326.55" fill="none" stroke="#444" stroke-width="0.7"/>
<text x="382.7" y="356.8" font-size="21" fill="#05a6e6" font-weight="normal" text-anchor="start" textLength="22.3" lengthAdjust="spacingAndGlyphs">G1</text>
<path d="M343.50,358.04 L344.01,350.24 C344.70,341.24 348.85,335.24 355.00,335.24 C361.15,335.24 365.30,341.24 365.99,350.24 L366.50,358.04 Q355.00,346.84 343.50,358.04 Z" fill="#d864f1" stroke="#333" stroke-width="1" stroke-linejoin="miter"/>
<path d="M348.50,356.24 H359.75" stroke="#222" stroke-width="1.3"/>
<path d="M358.00,354.64 L361.50,356.24 L358.00,357.84 Z" fill="#222"/>
<text x="382.7" y="388.3" font-size="21" fill="#05a6e6" font-weight="normal" text-anchor="start" textLength="36.8" lengthAdjust="spacingAndGlyphs">I211</text>
<rect x="343.5" y="367.03" width="23" height="22.2" fill="#93c47d" stroke="#333" stroke-width="1" rx="0"/>
<line x1="343.5" y1="377.4" x2="366.5" y2="377.4" stroke="#555" stroke-width="1"/>
<path d="M348.50,384.51 H360.25" stroke="#222" stroke-width="1.3"/>
<path d="M358.50,382.91 L362.00,384.51 L358.50,386.11 Z" fill="#222"/>
<text x="382.7" y="419.8" font-size="21" fill="#05a6e6" font-weight="normal" text-anchor="start" textLength="26.9" lengthAdjust="spacingAndGlyphs">I22</text>
<rect x="343.5" y="398.52" width="23" height="22.2" fill="#93c47d" stroke="#333" stroke-width="1" rx="0"/>
<line x1="343.5" y1="408.9" x2="366.5" y2="408.9" stroke="#555" stroke-width="1"/>
<path d="M348.50,416.00 H360.25" stroke="#222" stroke-width="1.3"/>
<path d="M358.50,414.40 L362.00,416.00 L358.50,417.60 Z" fill="#222"/>
<text x="382.7" y="451.3" font-size="21" fill="#05a6e6" font-weight="normal" text-anchor="start" textLength="129.3" lengthAdjust="spacingAndGlyphs">AutoSwitchA1</text>
<path d="M355.00,429.71 L366.50,452.51 L343.50,452.51 Z" fill="#38a9de" stroke="#333" stroke-width="1" stroke-linejoin="miter"/>
<text x="382.7" y="482.8" font-size="21" fill="#05a6e6" font-weight="normal" text-anchor="start" textLength="128.5" lengthAdjust="spacingAndGlyphs">AutoSwitchB1</text>
<path d="M355.00,461.20 L366.50,484.00 L343.50,484.00 Z" fill="#38a9de" stroke="#333" stroke-width="1" stroke-linejoin="miter"/>
<text x="382.7" y="514.3" font-size="21" fill="#05a6e6" font-weight="normal" text-anchor="start" textLength="154.5" lengthAdjust="spacingAndGlyphs">ManualSwitchA1</text>
<path d="M355.00,492.69 L366.50,515.49 L343.50,515.49 Z" fill="#38a9de" stroke="#333" stroke-width="1" stroke-linejoin="miter"/>
<text x="382.7" y="545.8" font-size="21" fill="#05a6e6" font-weight="normal" text-anchor="start" textLength="154.0" lengthAdjust="spacingAndGlyphs">ManualSwitchB1</text>
<path d="M355.00,524.18 L366.50,546.98 L343.50,546.98 Z" fill="#38a9de" stroke="#333" stroke-width="1" stroke-linejoin="miter"/>
<text x="382.7" y="577.3" font-size="21" fill="#05a6e6" font-weight="normal" text-anchor="start" textLength="91.8" lengthAdjust="spacingAndGlyphs">SystemA1</text>
<path d="M355.00,555.67 L366.50,578.47 L343.50,578.47 Z" fill="#38a9de" stroke="#333" stroke-width="1" stroke-linejoin="miter"/>
<text x="382.7" y="608.8" font-size="21" fill="#05a6e6" font-weight="normal" text-anchor="start" textLength="91.5" lengthAdjust="spacingAndGlyphs">SystemB1</text>
<path d="M355.00,587.16 L366.50,609.96 L343.50,609.96 Z" fill="#38a9de" stroke="#333" stroke-width="1" stroke-linejoin="miter"/>
<text x="382.7" y="640.2" font-size="21" fill="#05a6e6" font-weight="normal" text-anchor="start" textLength="24.5" lengthAdjust="spacingAndGlyphs">G2</text>
<circle cx="355.0" cy="630.05" r="11.4" fill="#ea9999" stroke="#333" stroke-width="0.9"/>
<text x="382.7" y="671.7" font-size="21" fill="#05a6e6" font-weight="normal" text-anchor="start" textLength="24.5" lengthAdjust="spacingAndGlyphs">G3</text>
<circle cx="355.0" cy="661.54" r="11.4" fill="#ea9999" stroke="#333" stroke-width="0.9"/>
<line x1="1401.3" y1="372" x2="1401.3" y2="699" stroke="#000" stroke-width="2"/>
<line x1="883.6" y1="449.8" x2="1876.2" y2="449.8" stroke="#000" stroke-width="2"/>
<line x1="884.6" y1="449.8" x2="884.6" y2="462" stroke="#000" stroke-width="2"/>
<line x1="1875.2" y1="449.8" x2="1875.2" y2="462" stroke="#000" stroke-width="2"/>
<line x1="884.6" y1="608" x2="884.6" y2="688" stroke="#000" stroke-width="2"/>
<line x1="646.8" y1="687" x2="1144.2" y2="687" stroke="#000" stroke-width="2"/>
<line x1="647.8" y1="687" x2="647.8" y2="699" stroke="#000" stroke-width="2"/>
<line x1="1143.2" y1="687" x2="1143.2" y2="699" stroke="#000" stroke-width="2"/>
<line x1="1875.2" y1="608" x2="1875.2" y2="698.6" stroke="#000" stroke-width="2"/>
<line x1="1680.4" y1="697.6" x2="2307.2" y2="697.6" stroke="#000" stroke-width="2"/>
<line x1="1681.4" y1="697.6" x2="1681.4" y2="720" stroke="#000" stroke-width="2"/>
<line x1="2090.9" y1="697.6" x2="2090.9" y2="720" stroke="#000" stroke-width="2"/>
<line x1="2306.2" y1="697.6" x2="2306.2" y2="720" stroke="#000" stroke-width="2"/>
<line x1="711" y1="805.2" x2="820.5" y2="805.2" stroke="#000" stroke-width="2"/>
<line x1="948" y1="805.2" x2="1079.5" y2="805.2" stroke="#000" stroke-width="2"/>
<line x1="1745" y1="826.6" x2="1833" y2="826.6" stroke="#000" stroke-width="2"/>
<line x1="1960" y1="826.6" x2="2026.5" y2="826.6" stroke="#000" stroke-width="2"/>
<line x1="647.8" y1="845" x2="647.8" y2="979" stroke="#000" stroke-width="2"/>
<line x1="646.8" y1="945.5" x2="1401.3" y2="945.5" stroke="#000" stroke-width="2"/>
<line x1="992.4" y1="945.5" x2="992.4" y2="979" stroke="#000" stroke-width="2"/>
<line x1="1401.3" y1="845" x2="1401.3" y2="979" stroke="#000" stroke-width="2"/>
<line x1="1401.3" y1="955.8" x2="1682.4" y2="955.8" stroke="#000" stroke-width="2"/>
<line x1="1681.4" y1="866" x2="1681.4" y2="979" stroke="#000" stroke-width="2"/>
<line x1="2306.2" y1="867" x2="2306.2" y2="960.4" stroke="#000" stroke-width="2"/>
<line x1="2149.6" y1="959.4" x2="2412.1" y2="959.4" stroke="#000" stroke-width="2"/>
<line x1="2150.6" y1="959.4" x2="2150.6" y2="985" stroke="#000" stroke-width="2"/>
<line x1="2411.1" y1="959.4" x2="2411.1" y2="985" stroke="#000" stroke-width="2"/>
<path d="M1401.3,370.2 L1404.50,376.00 L1398.10,376.00 Z" fill="#000" stroke="#000" stroke-width="0.8" stroke-linejoin="round"/>
<path d="M884.6,607.1 L887.80,612.90 L881.40,612.90 Z" fill="#000" stroke="#000" stroke-width="0.8" stroke-linejoin="round"/>
<path d="M1875.2,607.1 L1878.40,612.90 L1872.00,612.90 Z" fill="#000" stroke="#000" stroke-width="0.8" stroke-linejoin="round"/>
<path d="M647.8,844.2 L651.00,850.00 L644.60,850.00 Z" fill="#000" stroke="#000" stroke-width="0.8" stroke-linejoin="round"/>
<path d="M1401.3,844.2 L1404.50,850.00 L1398.10,850.00 Z" fill="#000" stroke="#000" stroke-width="0.8" stroke-linejoin="round"/>
<path d="M1681.4,865.2 L1684.60,871.00 L1678.20,871.00 Z" fill="#000" stroke="#000" stroke-width="0.8" stroke-linejoin="round"/>
<path d="M2306.2,865.7 L2309.40,871.50 L2303.00,871.50 Z" fill="#000" stroke="#000" stroke-width="0.8" stroke-linejoin="round"/>
<text x="743.7" y="799.6" font-size="18" fill="#000" font-weight="normal" text-anchor="middle">1</text>
<text x="1024.0" y="799.6" font-size="18" fill="#000" font-weight="normal" text-anchor="middle">2</text>
<text x="1778.5" y="820.8" font-size="18" fill="#000" font-weight="normal" text-anchor="middle">1</text>
<text x="1972.0" y="820.8" font-size="18" fill="#000" font-weight="normal" text-anchor="middle">2</text>
<text x="636.0" y="977.0" font-size="18" fill="#000" font-weight="normal" text-anchor="middle">1</text>
<text x="981.1" y="976.8" font-size="18" fill="#000" font-weight="normal" text-anchor="middle">2</text>
<text x="1390.3" y="977.0" font-size="18" fill="#000" font-weight="normal" text-anchor="middle">2</text>
<text x="1670.3" y="977.0" font-size="18" fill="#000" font-weight="normal" text-anchor="middle">1</text>
<rect x="1324.3" y="226" width="154" height="55" fill="#6d9eeb" stroke="#111" stroke-width="2" rx="1.5"/>
<text x="1370.3" y="258.8" font-size="16" fill="#ff1a1a" font-weight="normal" text-anchor="start" textLength="62.7" lengthAdjust="spacingAndGlyphs">RRS<tspan dy="-1.6">_</tspan><tspan dy="1.6">title</tspan></text>
<path d="M1359.10,369.00 L1360.96,343.17 C1363.52,313.37 1378.73,293.50 1401.30,293.50 C1423.87,293.50 1439.08,313.37 1441.64,343.17 L1443.50,369.00 Q1401.30,334.00 1359.10,369.00 Z" fill="#6d9eeb" stroke="#000" stroke-width="2" stroke-linejoin="miter"/>
<rect x="1338.1" y="318.9" width="126.4" height="24.4" fill="#fff" stroke="#111" stroke-width="1.8"/>
<text x="1383.1" y="336.7" font-size="16" fill="#1a1a1a" font-weight="normal" text-anchor="start" textLength="35.7" lengthAdjust="spacingAndGlyphs">RRS1</text>
<rect x="807.6" y="463" width="154" height="55" fill="#6d9eeb" stroke="#111" stroke-width="2" rx="1.5"/>
<text x="819.0" y="495.5" font-size="16" fill="#fff" font-weight="normal" text-anchor="start" textLength="131.1" lengthAdjust="spacingAndGlyphs" stroke="#fff" stroke-width="0.35">Control<tspan dy="-1.6">_</tspan><tspan dy="1.6">OF</tspan><tspan dy="-1.6">_</tspan><tspan dy="1.6">A</tspan><tspan dy="-1.6">_</tspan><tspan dy="1.6">title</tspan></text>
<line x1="884.6" y1="519" x2="884.6" y2="531.5" stroke="#000" stroke-width="2"/>
<path d="M842.40,606.00 L844.26,580.17 C846.82,550.37 862.03,530.50 884.60,530.50 C907.17,530.50 922.38,550.37 924.94,580.17 L926.80,606.00 Z" fill="#6d9eeb" stroke="#000" stroke-width="2" stroke-linejoin="miter"/>
<rect x="821.4" y="555.9" width="126.4" height="24.4" fill="#fff" stroke="#111" stroke-width="1.8"/>
<text x="831.8" y="573.7" font-size="16" fill="#1a1a1a" font-weight="normal" text-anchor="start" textLength="104.2" lengthAdjust="spacingAndGlyphs">Control<tspan dy="-1.6">_</tspan><tspan dy="1.6">OF</tspan><tspan dy="-1.6">_</tspan><tspan dy="1.6">A1</tspan></text>
<rect x="1798.2" y="463" width="154" height="55" fill="#6d9eeb" stroke="#111" stroke-width="2" rx="1.5"/>
<text x="1809.8" y="495.5" font-size="16" fill="#fff" font-weight="normal" text-anchor="start" textLength="130.9" lengthAdjust="spacingAndGlyphs" stroke="#fff" stroke-width="0.35">Control<tspan dy="-1.6">_</tspan><tspan dy="1.6">OF</tspan><tspan dy="-1.6">_</tspan><tspan dy="1.6">B</tspan><tspan dy="-1.6">_</tspan><tspan dy="1.6">title</tspan></text>
<line x1="1875.2" y1="519" x2="1875.2" y2="531.5" stroke="#000" stroke-width="2"/>
<path d="M1833.00,606.00 L1834.86,580.17 C1837.42,550.37 1852.63,530.50 1875.20,530.50 C1897.77,530.50 1912.98,550.37 1915.54,580.17 L1917.40,606.00 Z" fill="#6d9eeb" stroke="#000" stroke-width="2" stroke-linejoin="miter"/>
<rect x="1812.0" y="555.9" width="126.4" height="24.4" fill="#fff" stroke="#111" stroke-width="1.8"/>
<text x="1822.7" y="573.7" font-size="16" fill="#1a1a1a" font-weight="normal" text-anchor="start" textLength="104.0" lengthAdjust="spacingAndGlyphs">Control<tspan dy="-1.6">_</tspan><tspan dy="1.6">OF</tspan><tspan dy="-1.6">_</tspan><tspan dy="1.6">B1</tspan></text>
<rect x="570.8" y="700" width="154" height="55" fill="#ffd580" stroke="#111" stroke-width="2" rx="1.5"/>
<text x="624.2" y="733.0" font-size="16" fill="#111" font-weight="normal" text-anchor="start" textLength="47.1" lengthAdjust="spacingAndGlyphs">I1<tspan dy="-1.6">_</tspan><tspan dy="1.6">title</tspan></text>
<line x1="647.8" y1="756" x2="647.8" y2="768.5" stroke="#000" stroke-width="2"/>
<path d="M605.60,843.00 L607.46,817.17 C610.02,787.37 625.23,767.50 647.80,767.50 C670.37,767.50 685.58,787.37 688.14,817.17 L690.00,843.00 Z" fill="#ffd580" stroke="#000" stroke-width="2" stroke-linejoin="miter"/>
<path d="M607.80,843.00 L647.80,767.50 L687.80,843.00" fill="none" stroke="#000" stroke-width="1.1"/>
<rect x="584.6" y="792.9" width="126.4" height="24.4" fill="#fff" stroke="#111" stroke-width="1.8"/>
<text x="637.2" y="810.7" font-size="16" fill="#1a1a1a" font-weight="normal" text-anchor="start" textLength="20.7" lengthAdjust="spacingAndGlyphs">I12</text>
<rect x="807.6" y="700" width="154" height="55" fill="#93c47d" stroke="#111" stroke-width="2" rx="1.5"/>
<text x="860.6" y="733.0" font-size="16" fill="#fff" font-weight="normal" text-anchor="start" textLength="47.1" lengthAdjust="spacingAndGlyphs" stroke="#fff" stroke-width="0.35">I2<tspan dy="-1.6">_</tspan><tspan dy="1.6">title</tspan></text>
<rect x="828.9" y="769.2" width="111.4" height="73.1" fill="#93c47d" stroke="#111" stroke-width="2"/>
<path d="M850.60,825.25 H905.60 V821.30 L917.40,827.20 L905.60,833.10 V829.15 H850.60 Z" fill="#000"/>
<rect x="821.4" y="792.9" width="126.4" height="24.4" fill="#fff" stroke="#111" stroke-width="1.8"/>
<text x="873.7" y="810.7" font-size="16" fill="#1a1a1a" font-weight="normal" text-anchor="start" textLength="21.5" lengthAdjust="spacingAndGlyphs">I22</text>
<rect x="1066.2" y="700" width="154" height="55" fill="#38a9de" stroke="#111" stroke-width="2" rx="1.5"/>
<text x="1074.5" y="722.6" font-size="16" fill="#fff" font-weight="normal" text-anchor="start" textLength="137.0" lengthAdjust="spacingAndGlyphs" stroke="#fff" stroke-width="0.35">ManualSwitchA<tspan dy="-1.6">_</tspan><tspan dy="1.6">titl</tspan></text>
<text x="1138.7" y="742.6" font-size="16" fill="#fff" font-weight="normal" text-anchor="start" textLength="9.2" lengthAdjust="spacingAndGlyphs" stroke="#fff" stroke-width="0.35">e</text>
<line x1="1143.2" y1="756" x2="1143.2" y2="771.5" stroke="#000" stroke-width="2"/>
<path d="M1143.2,769.8 L1185.0,842.9 L1101.4,842.9 Z" fill="#38a9de" stroke="#111" stroke-width="2" stroke-linejoin="miter" stroke-miterlimit="10"/>
<rect x="1080.0" y="792.9" width="126.4" height="24.4" fill="#fff" stroke="#111" stroke-width="1.8"/>
<text x="1082.4" y="810.7" font-size="16" fill="#1a1a1a" font-weight="normal" text-anchor="start" textLength="120.4" lengthAdjust="spacingAndGlyphs">ManualSwitchA1</text>
<rect x="1324.3" y="700" width="154" height="55" fill="#6d9eeb" stroke="#111" stroke-width="2" rx="1.5"/>
<text x="1332.4" y="722.9" font-size="16" fill="#fff" font-weight="normal" text-anchor="start" textLength="138.0" lengthAdjust="spacingAndGlyphs" stroke="#fff" stroke-width="0.35">AandB<tspan dy="-1.6">_</tspan><tspan dy="1.6">Systems</tspan><tspan dy="-1.6">_</tspan><tspan dy="1.6">tit</tspan></text>
<text x="1395.8" y="742.3" font-size="16" fill="#fff" font-weight="normal" text-anchor="start" textLength="11.4" lengthAdjust="spacingAndGlyphs" stroke="#fff" stroke-width="0.35">le</text>
<line x1="1401.3" y1="756" x2="1401.3" y2="768.5" stroke="#000" stroke-width="2"/>
<path d="M1359.10,843.00 L1360.96,817.17 C1363.52,787.37 1378.73,767.50 1401.30,767.50 C1423.87,767.50 1439.08,787.37 1441.64,817.17 L1443.50,843.00 Z" fill="#6d9eeb" stroke="#000" stroke-width="2" stroke-linejoin="miter"/>
<rect x="1338.1" y="792.9" width="126.4" height="24.4" fill="#fff" stroke="#111" stroke-width="1.8"/>
<text x="1339.5" y="810.7" font-size="16" fill="#1a1a1a" font-weight="normal" text-anchor="start" textLength="123.3" lengthAdjust="spacingAndGlyphs">AandB<tspan dy="-1.6">_</tspan><tspan dy="1.6">Systems1</tspan></text>
<rect x="1604.4" y="721" width="154" height="55" fill="#ffd580" stroke="#111" stroke-width="2" rx="1.5"/>
<text x="1653.3" y="754.0" font-size="16" fill="#111" font-weight="normal" text-anchor="start" textLength="56.0" lengthAdjust="spacingAndGlyphs">I11<tspan dy="-1.6">_</tspan><tspan dy="1.6">title</tspan></text>
<line x1="1681.4" y1="777" x2="1681.4" y2="789.5" stroke="#000" stroke-width="2"/>
<path d="M1639.20,864.00 L1641.06,838.17 C1643.62,808.37 1658.83,788.50 1681.40,788.50 C1703.97,788.50 1719.18,808.37 1721.74,838.17 L1723.60,864.00 Z" fill="#ffd580" stroke="#000" stroke-width="2" stroke-linejoin="miter"/>
<path d="M1641.40,864.00 L1681.40,788.50 L1721.40,864.00" fill="none" stroke="#000" stroke-width="1.1"/>
<rect x="1618.2" y="813.9" width="126.4" height="24.4" fill="#fff" stroke="#111" stroke-width="1.8"/>
<text x="1666.6" y="831.7" font-size="16" fill="#1a1a1a" font-weight="normal" text-anchor="start" textLength="28.8" lengthAdjust="spacingAndGlyphs">I111</text>
<rect x="1819.6" y="721" width="154" height="55" fill="#93c47d" stroke="#111" stroke-width="2" rx="1.5"/>
<text x="1868.6" y="754.0" font-size="16" fill="#fff" font-weight="normal" text-anchor="start" textLength="56.3" lengthAdjust="spacingAndGlyphs" stroke="#fff" stroke-width="0.35">I21<tspan dy="-1.6">_</tspan><tspan dy="1.6">title</tspan></text>
<rect x="1840.9" y="790.2" width="111.4" height="73.1" fill="#93c47d" stroke="#111" stroke-width="2"/>
<path d="M1862.60,846.25 H1917.60 V842.30 L1929.40,848.20 L1917.60,854.10 V850.15 H1862.60 Z" fill="#000"/>
<rect x="1833.4" y="813.9" width="126.4" height="24.4" fill="#fff" stroke="#111" stroke-width="1.8"/>
<text x="1881.9" y="831.7" font-size="16" fill="#1a1a1a" font-weight="normal" text-anchor="start" textLength="28.5" lengthAdjust="spacingAndGlyphs">I211</text>
<rect x="2013.9" y="721" width="154" height="55" fill="#38a9de" stroke="#111" stroke-width="2" rx="1.5"/>
<text x="2022.1" y="744.2" font-size="16" fill="#fff" font-weight="normal" text-anchor="start" textLength="137.1" lengthAdjust="spacingAndGlyphs" stroke="#fff" stroke-width="0.35">ManualSwitchB<tspan dy="-1.6">_</tspan><tspan dy="1.6">titl</tspan></text>
<text x="2086.3" y="763.9" font-size="16" fill="#fff" font-weight="normal" text-anchor="start" textLength="9.2" lengthAdjust="spacingAndGlyphs" stroke="#fff" stroke-width="0.35">e</text>
<line x1="2090.9" y1="777" x2="2090.9" y2="792.5" stroke="#000" stroke-width="2"/>
<path d="M2090.9,790.8 L2132.7,863.9 L2049.1,863.9 Z" fill="#38a9de" stroke="#111" stroke-width="2" stroke-linejoin="miter" stroke-miterlimit="10"/>
<rect x="2027.7" y="813.9" width="126.4" height="24.4" fill="#fff" stroke="#111" stroke-width="1.8"/>
<text x="2031.0" y="831.7" font-size="16" fill="#1a1a1a" font-weight="normal" text-anchor="start" textLength="118.7" lengthAdjust="spacingAndGlyphs">ManualSwitchB1</text>
<rect x="2229.2" y="721" width="154" height="55" fill="#6d9eeb" stroke="#111" stroke-width="2" rx="1.5"/>
<text x="2279.5" y="754.0" font-size="16" fill="#fff" font-weight="normal" text-anchor="start" textLength="53.8" lengthAdjust="spacingAndGlyphs" stroke="#fff" stroke-width="0.35">G1<tspan dy="-1.6">_</tspan><tspan dy="1.6">title</tspan></text>
<line x1="2306.2" y1="777" x2="2306.2" y2="789.5" stroke="#000" stroke-width="2"/>
<path d="M2264.00,864.00 L2265.86,838.17 C2268.42,808.37 2283.63,788.50 2306.20,788.50 C2328.77,788.50 2343.98,808.37 2346.54,838.17 L2348.40,864.00 Q2306.20,829.00 2264.00,864.00 Z" fill="#d864f1" stroke="#000" stroke-width="2" stroke-linejoin="miter"/>
<rect x="2243.0" y="813.9" width="126.4" height="24.4" fill="#fff" stroke="#111" stroke-width="1.8"/>
<text x="2296.9" y="831.7" font-size="16" fill="#1a1a1a" font-weight="normal" text-anchor="start" textLength="16.4" lengthAdjust="spacingAndGlyphs">G1</text>
<path d="M2281.00,855.20 H2318.00 V851.00 L2330.00,857.00 L2318.00,863.00 V858.80 H2281.00 Z" fill="#000"/>
<rect x="570.8" y="980" width="154" height="55" fill="#38a9de" stroke="#111" stroke-width="2" rx="1.5"/>
<text x="584.9" y="1013.2" font-size="16" fill="#fff" font-weight="normal" text-anchor="start" textLength="126.0" lengthAdjust="spacingAndGlyphs" stroke="#fff" stroke-width="0.35">AutoSwitchA<tspan dy="-1.6">_</tspan><tspan dy="1.6">title</tspan></text>
<line x1="647.8" y1="1036" x2="647.8" y2="1051.5" stroke="#000" stroke-width="2"/>
<path d="M647.8,1049.8 L689.6,1122.9 L606.0,1122.9 Z" fill="#38a9de" stroke="#111" stroke-width="2" stroke-linejoin="miter" stroke-miterlimit="10"/>
<rect x="584.6" y="1072.9" width="126.4" height="24.4" fill="#fff" stroke="#111" stroke-width="1.8"/>
<text x="597.6" y="1090.7" font-size="16" fill="#1a1a1a" font-weight="normal" text-anchor="start" textLength="99.6" lengthAdjust="spacingAndGlyphs">AutoSwitchA1</text>
<rect x="915.4" y="980" width="154" height="55" fill="#38a9de" stroke="#111" stroke-width="2" rx="1.5"/>
<text x="943.0" y="1013.2" font-size="16" fill="#fff" font-weight="normal" text-anchor="start" textLength="98.1" lengthAdjust="spacingAndGlyphs" stroke="#fff" stroke-width="0.35">SystemA<tspan dy="-1.6">_</tspan><tspan dy="1.6">title</tspan></text>
<line x1="992.4" y1="1036" x2="992.4" y2="1051.5" stroke="#000" stroke-width="2"/>
<path d="M992.4,1049.8 L1034.2,1122.9 L950.6,1122.9 Z" fill="#38a9de" stroke="#111" stroke-width="2" stroke-linejoin="miter" stroke-miterlimit="10"/>
<rect x="929.2" y="1072.9" width="126.4" height="24.4" fill="#fff" stroke="#111" stroke-width="1.8"/>
<text x="955.7" y="1090.7" font-size="16" fill="#1a1a1a" font-weight="normal" text-anchor="start" textLength="71.7" lengthAdjust="spacingAndGlyphs">SystemA1</text>
<rect x="1324.3" y="980" width="154" height="55" fill="#38a9de" stroke="#111" stroke-width="2" rx="1.5"/>
<text x="1352.8" y="1013.2" font-size="16" fill="#fff" font-weight="normal" text-anchor="start" textLength="97.2" lengthAdjust="spacingAndGlyphs" stroke="#fff" stroke-width="0.35">SystemB<tspan dy="-1.6">_</tspan><tspan dy="1.6">title</tspan></text>
<line x1="1401.3" y1="1036" x2="1401.3" y2="1051.5" stroke="#000" stroke-width="2"/>
<path d="M1401.3,1049.8 L1443.1,1122.9 L1359.5,1122.9 Z" fill="#38a9de" stroke="#111" stroke-width="2" stroke-linejoin="miter" stroke-miterlimit="10"/>
<rect x="1338.1" y="1072.9" width="126.4" height="24.4" fill="#fff" stroke="#111" stroke-width="1.8"/>
<text x="1365.5" y="1090.7" font-size="16" fill="#1a1a1a" font-weight="normal" text-anchor="start" textLength="71.3" lengthAdjust="spacingAndGlyphs">SystemB1</text>
<rect x="1604.4" y="980" width="154" height="55" fill="#38a9de" stroke="#111" stroke-width="2" rx="1.5"/>
<text x="1618.5" y="1013.2" font-size="16" fill="#fff" font-weight="normal" text-anchor="start" textLength="126.0" lengthAdjust="spacingAndGlyphs" stroke="#fff" stroke-width="0.35">AutoSwitchB<tspan dy="-1.6">_</tspan><tspan dy="1.6">title</tspan></text>
<line x1="1681.4" y1="1036" x2="1681.4" y2="1051.5" stroke="#000" stroke-width="2"/>
<path d="M1681.4,1049.8 L1723.2,1122.9 L1639.6,1122.9 Z" fill="#38a9de" stroke="#111" stroke-width="2" stroke-linejoin="miter" stroke-miterlimit="10"/>
<rect x="1618.2" y="1072.9" width="126.4" height="24.4" fill="#fff" stroke="#111" stroke-width="1.8"/>
<text x="1631.2" y="1090.7" font-size="16" fill="#1a1a1a" font-weight="normal" text-anchor="start" textLength="99.6" lengthAdjust="spacingAndGlyphs">AutoSwitchB1</text>
<rect x="2073.6" y="986" width="154" height="55" fill="#6d9eeb" stroke="#111" stroke-width="2" rx="1.5"/>
<text x="2123.6" y="1019.2" font-size="16" fill="#fff" font-weight="normal" text-anchor="start" textLength="53.6" lengthAdjust="spacingAndGlyphs" stroke="#fff" stroke-width="0.35">G3<tspan dy="-1.6">_</tspan><tspan dy="1.6">title</tspan></text>
<line x1="2150.6" y1="1042" x2="2150.6" y2="1054.5" stroke="#000" stroke-width="2"/>
<circle cx="2150.6" cy="1091.7" r="37" fill="#ea9999" stroke="#111" stroke-width="2"/>
<rect x="2087.4" y="1078.9" width="126.4" height="24.4" fill="#fff" stroke="#111" stroke-width="1.8"/>
<text x="2140.8" y="1096.7" font-size="16" fill="#1a1a1a" font-weight="normal" text-anchor="start" textLength="19.2" lengthAdjust="spacingAndGlyphs">G3</text>
<rect x="2334.1" y="986" width="154" height="55" fill="#6d9eeb" stroke="#111" stroke-width="2" rx="1.5"/>
<text x="2384.1" y="1019.2" font-size="16" fill="#fff" font-weight="normal" text-anchor="start" textLength="54.2" lengthAdjust="spacingAndGlyphs" stroke="#fff" stroke-width="0.35">G2<tspan dy="-1.6">_</tspan><tspan dy="1.6">title</tspan></text>
<line x1="2411.1" y1="1042" x2="2411.1" y2="1054.5" stroke="#000" stroke-width="2"/>
<circle cx="2411.1" cy="1091.7" r="37" fill="#ea9999" stroke="#111" stroke-width="2"/>
<rect x="2347.9" y="1078.9" width="126.4" height="24.4" fill="#fff" stroke="#111" stroke-width="1.8"/>
<text x="2401.5" y="1096.7" font-size="16" fill="#1a1a1a" font-weight="normal" text-anchor="start" textLength="19.0" lengthAdjust="spacingAndGlyphs">G2</text>
<rect x="876" y="522.3" width="16.7" height="16.1" rx="3" fill="#6b6b6b" fill-opacity="0.22"/>
<circle cx="884.5" cy="530.8" r="5.6" fill="#e60000"/>
<circle cx="2530.5" cy="164.4" r="14.2" fill="#6d9eeb" stroke="#333" stroke-width="0.9"/>
<circle cx="2530.5" cy="213.0" r="14.2" fill="#ea9999" stroke="#333" stroke-width="0.9"/>
<path d="M2516.20,276.00 L2516.83,266.15 C2517.70,254.78 2522.87,247.20 2530.55,247.20 C2538.23,247.20 2543.40,254.78 2544.27,266.15 L2544.90,276.00 Z" fill="#6d9eeb" stroke="#333" stroke-width="0.9" stroke-linejoin="miter"/>
<path d="M2516.20,324.60 L2516.83,314.75 C2517.70,303.38 2522.87,295.80 2530.55,295.80 C2538.23,295.80 2543.40,303.38 2544.27,314.75 L2544.90,324.60 Z" fill="#d864f1" stroke="#333" stroke-width="0.9" stroke-linejoin="miter"/>
<path d="M2523.60,320.40 H2535.30" stroke="#222" stroke-width="1.6"/>
<path d="M2533.20,318.30 L2537.40,320.40 L2533.20,322.50 Z" fill="#222"/>
<path d="M2516.20,373.20 L2516.83,363.35 C2517.70,351.98 2522.87,344.40 2530.55,344.40 C2538.23,344.40 2543.40,351.98 2544.27,363.35 L2544.90,373.20 Q2530.55,359.60 2516.20,373.20 Z" fill="#d864f1" stroke="#333" stroke-width="0.9" stroke-linejoin="miter"/>
<path d="M2523.60,369.70 H2535.30" stroke="#222" stroke-width="1.6"/>
<path d="M2533.20,367.60 L2537.40,369.70 L2533.20,371.80 Z" fill="#222"/>
<path d="M2516.20,421.80 L2516.83,411.95 C2517.70,400.58 2522.87,393.00 2530.55,393.00 C2538.23,393.00 2543.40,400.58 2544.27,411.95 L2544.90,421.80 Q2530.55,408.20 2516.20,421.80 Z" fill="#6d9eeb" stroke="#333" stroke-width="0.9" stroke-linejoin="miter"/>
<path d="M2516.20,470.40 L2516.83,460.55 C2517.70,449.18 2522.87,441.60 2530.55,441.60 C2538.23,441.60 2543.40,449.18 2544.27,460.55 L2544.90,470.40 Z" fill="#6d9eeb" stroke="#333" stroke-width="0.9" stroke-linejoin="miter"/>
<text x="2530.5" y="467.9" style="font-family:Liberation Serif,serif;font-style:italic" font-size="10.5" fill="#222" text-anchor="middle">k/n</text>
<path d="M2516.20,519.00 L2516.83,509.15 C2517.70,497.78 2522.87,490.20 2530.55,490.20 C2538.23,490.20 2543.40,497.78 2544.27,509.15 L2544.90,519.00 Z" fill="#ffd580" stroke="#333" stroke-width="0.9" stroke-linejoin="miter"/>
<path d="M2517.00,519.00 L2530.55,490.20 L2544.10,519.00" fill="none" stroke="#333" stroke-width="0.7"/>
<path d="M2516.20,567.60 L2516.83,557.75 C2517.70,546.38 2522.87,538.80 2530.55,538.80 C2538.23,538.80 2543.40,546.38 2544.27,557.75 L2544.90,567.60 Q2530.55,554.00 2516.20,567.60 Z" fill="#ffd580" stroke="#333" stroke-width="0.9" stroke-linejoin="miter"/>
<path d="M2517.00,567.60 L2530.55,538.80 L2544.10,567.60" fill="none" stroke="#333" stroke-width="0.7"/>
<rect x="2512.4" y="587.6" width="36.3" height="28.4" fill="#ffd580" stroke="#333" stroke-width="0.9" rx="1.2"/>
<line x1="2512.4" y1="601.9" x2="2548.7" y2="601.9" stroke="#444" stroke-width="0.9"/>
<rect x="2536.3" y="608.3000000000001" width="12.3" height="7.6" fill="#fff" stroke="#555" stroke-width="0.6" rx="0"/>
<rect x="2512.4" y="636.1999999999999" width="36.3" height="28.4" fill="#e06666" stroke="#333" stroke-width="0.9" rx="1.2"/>
<line x1="2512.4" y1="650.5" x2="2548.7" y2="650.5" stroke="#444" stroke-width="0.9"/>
<path d="M2512.6,656.4 L2519.9,660.4 L2512.6,664.3 Z" fill="#fff" stroke="#555" stroke-width="0.5"/>
<rect x="2512.4" y="684.8" width="36.3" height="28.4" fill="#e06666" stroke="#333" stroke-width="0.9" rx="1.2"/>
<line x1="2512.4" y1="699.1" x2="2548.7" y2="699.1" stroke="#444" stroke-width="0.9"/>
<path d="M2512.6,705.0 L2519.9,709.0 L2512.6,712.9 Z" fill="#fff" stroke="#555" stroke-width="0.5"/>
<text x="2523.5" y="711.0" style="font-family:Liberation Serif,serif;font-style:italic" font-size="11" fill="#222" text-anchor="middle">p</text>
<rect x="2512.4" y="733.4" width="36.3" height="28.4" fill="#93c47d" stroke="#333" stroke-width="0.9" rx="1.2"/>
<line x1="2512.4" y1="747.7" x2="2548.7" y2="747.7" stroke="#444" stroke-width="0.9"/>
<path d="M2519.20,756.10 H2538.50" stroke="#1a1a1a" stroke-width="1.6"/>
<path d="M2536.20,753.80 L2540.80,756.10 L2536.20,758.40 Z" fill="#1a1a1a"/>
<rect x="2512.4" y="782.0" width="36.3" height="28.4" fill="#93c47d" stroke="#333" stroke-width="0.9" rx="1.2"/>
<line x1="2512.4" y1="796.3" x2="2548.7" y2="796.3" stroke="#444" stroke-width="0.9"/>
<path d="M2519.80,805.50 H2538.50" stroke="#1a1a1a" stroke-width="1.6"/>
<path d="M2536.20,803.20 L2540.80,805.50 L2536.20,807.80 Z" fill="#1a1a1a"/>
<path d="M2524.40,803.20 L2519.80,805.50 L2524.40,807.80 Z" fill="#1a1a1a"/>
<path d="M2530.60,830.60 L2545.00,859.00 L2516.20,859.00 Z" fill="#38a9de" stroke="#333" stroke-width="0.9" stroke-linejoin="miter"/>
<path d="M2530.60,879.20 L2545.00,907.60 L2516.20,907.60 Z" fill="#38a9de" stroke="#333" stroke-width="0.9" stroke-linejoin="miter"/>
<text x="2530.6" y="905.0" style="font-family:Liberation Serif,serif;font-style:italic" font-size="10" fill="#222" text-anchor="middle">E</text>
<pattern id="hatch" patternUnits="userSpaceOnUse" width="3" height="3" patternTransform="rotate(45)"><rect width="3" height="3" fill="#e8e8e8"/><line x1="0" y1="0" x2="0" y2="3" stroke="#9a9a9a" stroke-width="1.1"/></pattern>
<circle cx="2530.5" cy="942.0" r="14.8" fill="url(#hatch)" stroke="#333" stroke-width="0.9"/>
<rect x="2442.5" y="153.5" width="34.09999999999991" height="30.900000000000006" fill="#fff" stroke="#bdbdbd" stroke-width="1" rx="4.5"/>
<g fill="#212529"><path d="M2450.6,167.6 A8.5,8.5 0 0 1 2466,164 L2467.9,160.2 L2468.2,167.2 L2461.4,167.2 L2464.2,164.9 A6,6 0 0 0 2453.6,167.6 Z"/><path d="M2467.9,170.2 A8.5,8.5 0 0 1 2452.5,173.8 L2450.6,177.6 L2450.3,170.6 L2457.1,170.6 L2454.3,172.9 A6,6 0 0 0 2464.9,170.2 Z"/></g>
<rect x="2442.5" y="191.2" width="34.09999999999991" height="31.200000000000017" fill="#fff" stroke="#bdbdbd" stroke-width="1" rx="4.5"/>
<circle cx="2459.3" cy="206.3" r="8.9" fill="#212529"/>
<path d="M2459.3,201.2 V211.4 M2454.2,206.3 H2464.4" stroke="#fff" stroke-width="2.4"/>
<rect x="2458" y="228" width="1" height="150" fill="#b0b0b0" stroke="none" stroke-width="0" rx="0"/>
<rect x="2462.1" y="228" width="1" height="150" fill="#b0b0b0" stroke="none" stroke-width="0" rx="0"/>
<rect x="2454.8" y="297.6" width="12.6" height="3.3" fill="#7a7a7a" stroke="none" stroke-width="0" rx="1.6"/>
<rect x="2446.6" y="302.4" width="24.8" height="13" fill="#fff" stroke="#bdbdbd" stroke-width="1" rx="2.5"/>
<rect x="2451.9" y="307.2" width="16.2" height="4.7" fill="#212529" stroke="none" stroke-width="0" rx="1"/>
<rect x="2442.5" y="383.4" width="34.09999999999991" height="31.0" fill="#fff" stroke="#bdbdbd" stroke-width="1" rx="4.5"/>
<circle cx="2459.4" cy="398.5" r="8.9" fill="#212529"/>
<rect x="2453.8" y="396.9" width="11.2" height="3.2" fill="#fff" stroke="none" stroke-width="0" rx="0"/>
<text x="48.8" y="1336.2" font-size="21" fill="#1a9fe4" font-weight="normal" text-anchor="start" textLength="100.0" lengthAdjust="spacingAndGlyphs">Powered by</text>
<text x="178.0" y="1336.2" font-size="24" fill="#1a9fe4" font-weight="bold" text-anchor="start" textLength="64.0" lengthAdjust="spacingAndGlyphs">Storm</text>
<g transform="translate(156,1318.5)"><path d="M4,12 C1,12 0,9 1.5,7 C2,4 5,3 7,4 C8,1 12,0 14.5,1.5 C17,0.5 20,3 19.5,6 C21,7 21,11 18,12" fill="none" stroke="#1f4e8c" stroke-width="2.2" stroke-linecap="round"/><path d="M7,12 L5,17 M10,12 L8,19 M13,12 L11,17" stroke="#1a9fe4" stroke-width="1.8" stroke-linecap="round"/></g>
<text x="2157.3" y="1335.0" font-size="20.5" fill="#222" font-weight="normal" text-anchor="start" textLength="173.7" lengthAdjust="spacingAndGlyphs">Version: 3.0.0 (beta)</text>
<rect x="0" y="1303" width="331" height="9" fill="#e1e1e1" stroke="none" stroke-width="0" rx="0"/>
<rect x="0" y="1303.5" width="283" height="8.5" fill="#c1c1c1" stroke="none" stroke-width="0" rx="4.2"/>
<path d="M360.5,1275 L352.5,1282.3 L360.5,1289.6 Z" fill="#000"/>
<path d="M2532,1275 L2540,1282.3 L2532,1289.6 Z" fill="#000"/>
</svg>
</body></html>
